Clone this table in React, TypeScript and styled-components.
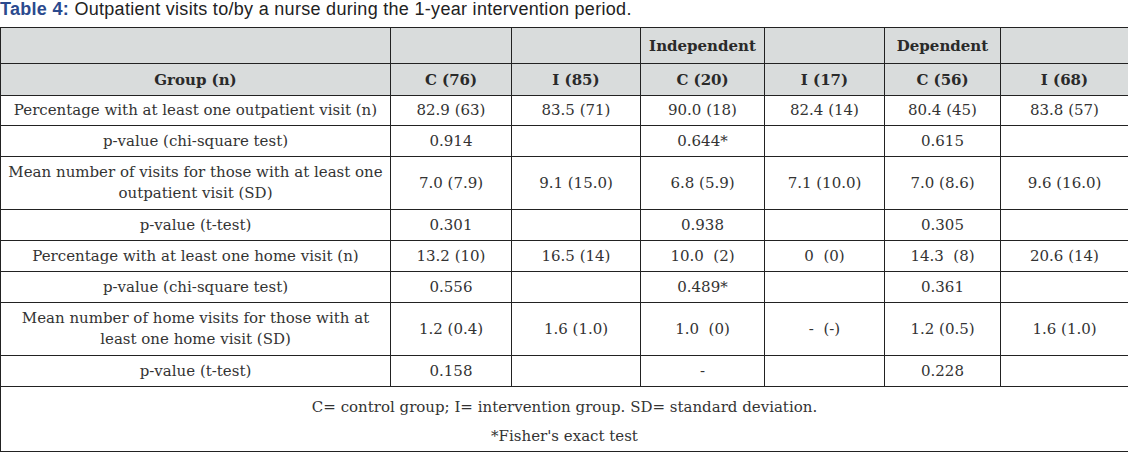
import { createGlobalStyle } from "styled-components";
import styled from "styled-components";

const GlobalStyle = createGlobalStyle`
  html, body {
    margin: 0;
    padding: 0;
    background: #ffffff;
  }
`

const Page = styled.div`
  width: 1128px;
`

const Caption = styled.div`
  height: 27px;
  font-family: "Liberation Sans", Arial, sans-serif;
  font-size: 18px;
  line-height: 18px;
  letter-spacing: 0.3px;
  color: #222222;
  white-space: nowrap;
`

const CaptionLabel = styled.b`
  color: #2b4a8e;
`

const Table = styled.table`
  width: 1128px;
  border-collapse: collapse;
  table-layout: fixed;
  font-family: "DejaVu Serif", "Liberation Serif", serif;
  font-size: 15px;
  color: #333333;
`

const HeadRow = styled.tr<{ $h: number }>`
  height: ${(p) => p.$h}px;
  background: #d9dcdc;
`

const Row = styled.tr<{ $h: number }>`
  height: ${(p) => p.$h}px;
`

const Th = styled.th`
  border: 1.5px solid #222222;
  font-weight: bold;
  color: #2a2a2a;
  text-align: center;
  vertical-align: middle;
  padding: 0 4px;
  line-height: 20px;
`

const Td = styled.td`
  border: 1.5px solid #222222;
  text-align: center;
  vertical-align: middle;
  padding: 0 4px;
  line-height: 21px;
  white-space: pre;
`

const LabelCell = styled(Td)`
  white-space: normal;
`

const Footnote = styled.td`
  border: 1.5px solid #222222;
  text-align: center;
  vertical-align: middle;
  padding: 6px 0 0;
  line-height: 29px;
`

const widths = [390, 121, 129, 124, 120, 116, 128]

type DataRow = { label: string; h: number; cells: string[] }

const rows: DataRow[] = [
  { label: "Percentage with at least one outpatient visit (n)", h: 30, cells: ["82.9 (63)", "83.5 (71)", "90.0 (18)", "82.4 (14)", "80.4 (45)", "83.8 (57)"] },
  { label: "p-value (chi-square test)", h: 31, cells: ["0.914", "", "0.644*", "", "0.615", ""] },
  { label: "Mean number of visits for those with at least one outpatient visit (SD)", h: 53, cells: ["7.0 (7.9)", "9.1 (15.0)", "6.8 (5.9)", "7.1 (10.0)", "7.0 (8.6)", "9.6 (16.0)"] },
  { label: "p-value (t-test)", h: 31, cells: ["0.301", "", "0.938", "", "0.305", ""] },
  { label: "Percentage with at least one home visit (n)", h: 31, cells: ["13.2 (10)", "16.5 (14)", "10.0  (2)", "0  (0)", "14.3  (8)", "20.6 (14)"] },
  { label: "p-value (chi-square test)", h: 31, cells: ["0.556", "", "0.489*", "", "0.361", ""] },
  { label: "Mean number of home visits for those with at least one home visit (SD)", h: 53, cells: ["1.2 (0.4)", "1.6 (1.0)", "1.0  (0)", "-  (-)", "1.2 (0.5)", "1.6 (1.0)"] },
  { label: "p-value (t-test)", h: 31, cells: ["0.158", "", "-", "", "0.228", ""] },
]

export default function App() {
  return (
    <Page>
      <GlobalStyle />
      <Caption>
        <CaptionLabel>Table 4:</CaptionLabel> Outpatient visits to/by a nurse during the 1-year intervention period.
      </Caption>
      <Table>
        <colgroup>
          {widths.map((w, i) => (
            <col key={i} style={{ width: w }} />
          ))}
        </colgroup>
        <thead>
          <HeadRow $h={36}>
            <Th></Th>
            <Th></Th>
            <Th></Th>
            <Th>Independent</Th>
            <Th></Th>
            <Th>Dependent</Th>
            <Th></Th>
          </HeadRow>
          <HeadRow $h={32}>
            <Th>Group (n)</Th>
            <Th>C (76)</Th>
            <Th>I (85)</Th>
            <Th>C (20)</Th>
            <Th>I (17)</Th>
            <Th>C (56)</Th>
            <Th>I (68)</Th>
          </HeadRow>
        </thead>
        <tbody>
          {rows.map((r, i) => (
            <Row key={i} $h={r.h}>
              <LabelCell>{r.label}</LabelCell>
              {r.cells.map((c, j) => (
                <Td key={j}>{c}</Td>
              ))}
            </Row>
          ))}
          <Row $h={65}>
            <Footnote colSpan={7}>
              C= control group; I= intervention group. SD= standard deviation.
              <br />
              *Fisher's exact test
            </Footnote>
          </Row>
        </tbody>
      </Table>
    </Page>
  )
}
